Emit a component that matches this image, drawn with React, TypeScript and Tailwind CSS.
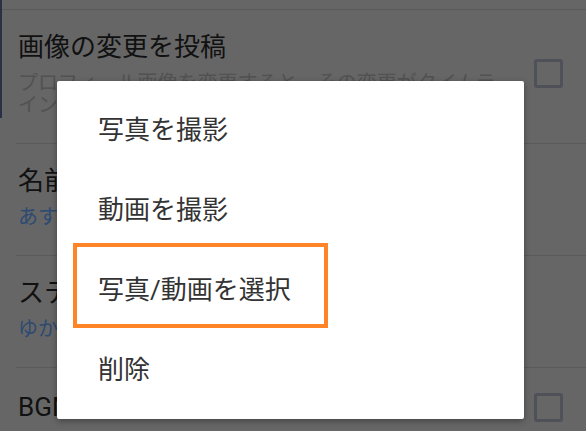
import React from 'react';

interface SettingRow {
  id: string;
  title: string;
  subtitle?: string;
  subtitleTone?: 'grey' | 'blue';
  checkbox?: boolean;
}

const rows: SettingRow[] = [
  {
    id: 'post-image',
    title: '画像の変更を投稿',
    subtitle: 'プロフィール画像を変更すると、その変更がタイムラインに投稿されます。',
    subtitleTone: 'grey',
    checkbox: true,
  },
  { id: 'name', title: '名前', subtitle: 'あすか', subtitleTone: 'blue' },
  { id: 'status', title: 'ステータスメッセージ', subtitle: 'ゆかいな毎日', subtitleTone: 'blue' },
  { id: 'bgm', title: 'BGM', checkbox: true },
];

const menuItems = ['写真を撮影', '動画を撮影', '写真/動画を選択', '削除'];

export default function App() {
  return (
    <div
      className="relative w-[586px] h-[431px] overflow-hidden bg-[#666666]"
      style={{ fontFamily: 'Roboto, "Noto Sans CJK JP", sans-serif' }}
    >
      {/* dimmed settings list behind the dialog */}
      <div className="absolute left-0 top-0 w-[2px] h-[118px] bg-[#2b3047]" />
      <div className="h-[9px]" />
      <div className="border-t border-[#5a5a5a]" />
      {rows.map((row, i) => (
        <div key={row.id}>
          {i > 0 && <div className="ml-4 border-t border-[#5a5a5a]" />}
          <div
            className={`flex items-center gap-6 pl-[18px] pr-[23px] pb-[27px] ${
              row.subtitle ? 'pt-5' : 'pt-[22px]'
            }`}
          >
            <div className="flex-1 min-w-0">
              <div className="text-[26px] leading-[34px] text-[#111111] whitespace-nowrap">{row.title}</div>
              {row.subtitle && (
                <div
                  className={`mt-2 text-[20px] leading-[22px] ${
                    row.subtitleTone === 'blue' ? 'text-[#2d4a72]' : 'text-[#525252]'
                  }`}
                >
                  {row.subtitle}
                </div>
              )}
            </div>
            {row.checkbox && (
              <div className="w-[29px] h-[29px] shrink-0 rounded-[3px] border-[3px] border-[#4f5159]" />
            )}
          </div>
        </div>
      ))}

      {/* action dialog */}
      <div className="absolute left-[57px] top-[81px] w-[467px] bg-white rounded-[2px] shadow-[0_2px_6px_rgba(0,0,0,0.35)] py-[9px]">
        {menuItems.map((label) => (
          <div key={label} className="h-[80px] flex items-center pl-[41px] text-[26px] text-[#333333]">
            {label}
          </div>
        ))}
        <div className="absolute left-[16px] top-[162px] w-[255px] h-[85px] border-4 border-[#ff8427]" />
      </div>
    </div>
  );
}
